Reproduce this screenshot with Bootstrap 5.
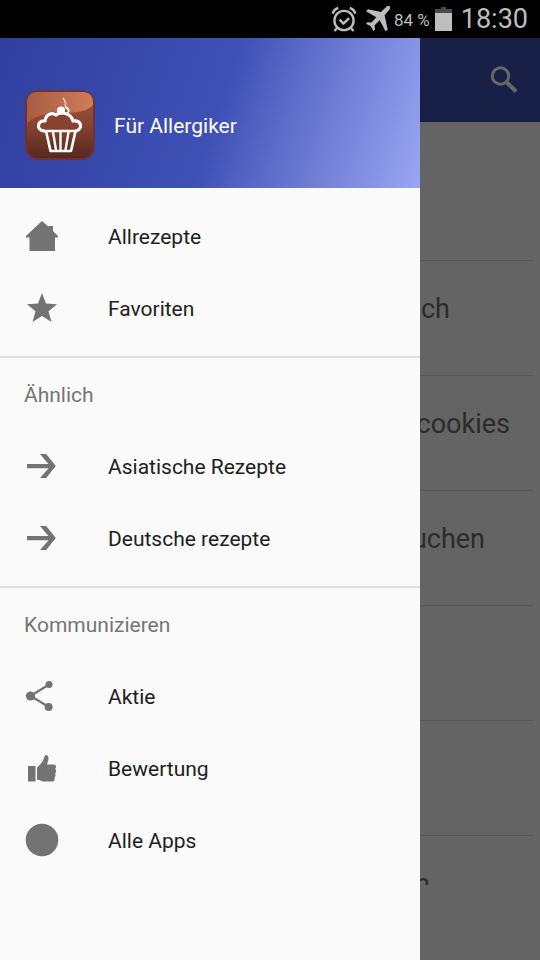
<!DOCTYPE html>
<html lang="de">
<head>
<meta charset="utf-8">
<meta name="viewport" content="width=device-width, initial-scale=1">
<title>Für Allergiker</title>
<link href="https://cdn.jsdelivr.net/npm/bootstrap@5.3.0/dist/css/bootstrap.min.css" rel="stylesheet">
<style>
  body { font-family: Roboto, "Liberation Sans", sans-serif; background: #fafafa; color: #212121; }
  svg { display: block; flex-shrink: 0; }
  .status { height: 38px; background: #000; color: #bdbdbd; padding-right: 12px; }
  .battery-text { font-size: 17px; line-height: 24px; padding-top: 2px; margin-left: 3px; }
  .clock { font-size: 27px; line-height: 36px; margin-left: 8px; }
  .appbar { height: 84px; background: #3f51b5; padding-right: 18px; }
  .btn-search { width: 36px; height: 36px; color: #fff; }
  .recipes { flex: 1 1 0; }
  .recipe { height: 115px; padding-top: 32px; margin-right: 7px; border-bottom: 1px solid #dcdcdc;
            font-size: 27px; line-height: 32px; color: #6e6e6e; flex-shrink: 0; text-align: right; }
  .recipe-first { height: 139px; }
  .end-s { padding-right: 23px; }
  .end-m { padding-right: 48px; }
  .end-l { padding-right: 83px; }
  .end-xl { padding-right: 103px; }
  .adspace { height: 75px; }
  .scrim { background: rgba(0,0,0,.6); }
  .drawer { width: 420px; max-width: 88%; background: #fafafa; }
  .drawer-head { height: 150px; padding: 24px 24px 0; gap: 18px; color: #fff; font-size: 21px; line-height: 24px;
                 background: linear-gradient(108deg, #303f9f 0%, #3f51b5 52%, #5c6bc8 66%, #9aa6f2 100%); }
  .group { padding: 12px 0; }
  .group + .group { border-top: 2px solid #dedede; padding-top: 0; }
  .group-title { height: 72px; padding: 0 24px; font-size: 21px; line-height: 24px; font-weight: 400; color: #757575; }
  .entry { height: 72px; padding: 0 24px; gap: 48px; font-size: 21px; line-height: 24px; color: #212121; }
  .entry svg { color: #737373; }
  .entry span, .group-title span, .drawer-head span { padding-top: 2px; }
</style>
</head>
<body>
<div class="d-flex flex-column min-vh-100">
  <div class="status d-flex align-items-center justify-content-end">
    <svg width="26" height="28" viewBox="0 0 26 28" fill="none" stroke="#bdbdbd" stroke-width="2.4" aria-hidden="true">
      <circle cx="13" cy="15.500" r="9.600"/><path d="M8.600 14.700l3.900 3.800 5.600-5.300M1.600 8.700C2.400 6 4.400 3.800 7.200 3M24.400 8.700C23.600 6 21.600 3.800 18.800 3M6 23l-2.500 3M20 23l2.500 3"/>
    </svg>
    <svg class="ms-2" width="26" height="28" viewBox="0 0 26 28" fill="#bdbdbd" aria-hidden="true">
      <path d="M24.600 1.200c1 1.300.4 2.900-.9 4.400L19.600 10.200 22.700 24.400 20.600 26.300 14.700 15.300 9.600 20.300 10 24.500 8.500 26 5.800 21.300 1 18.700 2.500 17.200 6.500 17.500 11.300 12.300 1 6.300 3 4.200 16 7.100 20.400 2.700C21.900 1.200 23.500.1 24.600 1.200Z"/>
    </svg>
    <span class="battery-text">84 %</span>
    <svg class="ms-1" width="19" height="24" viewBox="0 0 19 24" aria-hidden="true">
      <path fill="#4a4a4a" d="M7 0h5v2h6v4H1V2h6z"/><path fill="#bdbdbd" d="M1 6h17v18H1z"/>
    </svg>
    <span class="clock">18:30</span>
  </div>

  <div class="position-relative flex-grow-1 d-flex flex-column">
    <header class="appbar d-flex align-items-center justify-content-end">
      <button type="button" class="btn btn-search p-0 border-0" aria-label="Suchen">
        <svg width="36" height="36" viewBox="0 0 36 36" fill="none" stroke="currentColor" aria-hidden="true">
          <circle cx="14.500" cy="14" r="8.200" stroke-width="3"/><path d="M20.500 20l9.500 9.500" stroke-width="4"/>
        </svg>
      </button>
    </header>
    <main class="recipes d-flex flex-column overflow-hidden">
      <div class="recipe recipe-first"></div>
      <div class="recipe end-l">ch</div>
      <div class="recipe end-s">cookies</div>
      <div class="recipe end-m">uchen</div>
      <div class="recipe"></div>
      <div class="recipe"></div>
      <div class="recipe end-xl">n</div>
    </main>
    <div class="adspace"></div>

    <div class="scrim position-absolute top-0 start-0 w-100 h-100"></div>

    <nav class="drawer position-absolute top-0 start-0 h-100" aria-label="Hauptmenü">
      <div class="drawer-head d-flex align-items-center">
        <svg width="72" height="72" viewBox="0 0 72 72" aria-hidden="true">
          <defs>
            <linearGradient id="choc" x1="0" y1="0" x2="0" y2="1"><stop offset="0" stop-color="#a3573d"/><stop offset=".5" stop-color="#87432f"/><stop offset="1" stop-color="#56271f"/></linearGradient>
            <linearGradient id="gloss" x1="0" y1="0" x2="1" y2="0"><stop offset="0" stop-color="#a85c42"/><stop offset="1" stop-color="#d07c58"/></linearGradient>
          </defs>
          <rect x="2" y="2" width="68" height="68" rx="12" fill="url(#choc)" stroke="#6b3340" stroke-width="2"/>
          <path d="M3 27V14Q3 3 14 3H58Q69 3 69 14V16C61 24 49 24 33 24 18 25 9 28 3 34Z" fill="url(#gloss)"/>
          <path d="M20 42C9 42 12 30 20 31 20 23 29 21 33 24 37 19 48 21 50 30 60 29 62 42 51 42Z" fill="#87432f"/>
          <g fill="none" stroke="#fff" stroke-linejoin="round" stroke-linecap="round">
            <path d="M20 42C12 41 13 31 21 32 22 25 28 23 32 26 37 22 47 24 49 32 58 31 59 40 52 42" stroke-width="3.200"/>
            <path d="M19.500 42H53M22 42L26.500 62H47L51.500 42" stroke-width="2.600"/>
            <path d="M29 43l3 18M36.500 43v18M44.500 43l-3 18" stroke-width="2.400"/>
          </g>
          <circle cx="37" cy="21.500" r="4" fill="#fff"/><path d="M41 18q5 1 3 6" fill="none" stroke="#fff" stroke-width="1.800"/>
          <path d="M41 17C43 14 41 12 39 9" fill="none" stroke="#f2cfc0" stroke-width="1.600"/>
        </svg>
        <span>Für Allergiker</span>
      </div>

      <div class="group">
        <a class="entry d-flex align-items-center text-decoration-none" href="#">
          <svg width="36" height="36" viewBox="0 0 36 36" fill="currentColor" aria-hidden="true"><path d="M18 3L24.500 8.800V8h4.500v5L34 18v1.500H31V33H5.500V19.500H2V18Z"/></svg>
          <span>Allrezepte</span></a>
        <a class="entry d-flex align-items-center text-decoration-none" href="#">
          <svg width="36" height="36" viewBox="0 0 36 36" fill="currentColor" aria-hidden="true"><path d="M18 3L22 13.500 33 14.300 24.500 21.300 27.500 32 18 26 8.500 32 11.500 21.300 3 14.300 14 13.500Z"/></svg>
          <span>Favoriten</span></a>
      </div>

      <div class="group">
        <h2 class="group-title d-flex align-items-center m-0"><span>Ähnlich</span></h2>
        <a class="entry d-flex align-items-center text-decoration-none" href="#">
          <svg width="36" height="36" viewBox="0 0 36 36" fill="currentColor" aria-hidden="true"><path d="M3 16H24.500L16 6h6.200L31.800 18 22.200 30H16L24.500 20.200H3Z"/></svg>
          <span>Asiatische Rezepte</span></a>
        <a class="entry d-flex align-items-center text-decoration-none" href="#">
          <svg width="36" height="36" viewBox="0 0 36 36" fill="currentColor" aria-hidden="true"><path d="M3 16H24.500L16 6h6.200L31.800 18 22.200 30H16L24.500 20.200H3Z"/></svg>
          <span>Deutsche rezepte</span></a>
      </div>

      <div class="group">
        <h2 class="group-title d-flex align-items-center m-0"><span>Kommunizieren</span></h2>
        <a class="entry d-flex align-items-center text-decoration-none" href="#">
          <svg width="36" height="36" viewBox="0 0 36 36" fill="currentColor" aria-hidden="true"><path d="M25 6.500L6.500 18 25 29" fill="none" stroke="currentColor" stroke-width="2.200"/><circle cx="6.500" cy="18" r="4.600"/><circle cx="25" cy="6.500" r="3.500"/><circle cx="24.600" cy="29" r="4"/></svg>
          <span>Aktie</span></a>
        <a class="entry d-flex align-items-center text-decoration-none" href="#">
          <svg width="36" height="36" viewBox="0 0 36 36" fill="currentColor" aria-hidden="true"><path d="M4 16h7.500v15.500H4zM13 17.500C17 14 19.500 11 20.500 6.500 21 4 24.500 4.500 24.500 8 24.500 10.500 23.500 12.500 23 14.500H30C32.500 14.500 32.500 18 31 18.500 32.500 20 32.500 22.500 31 23.300 32 25 31.500 26.800 30.500 27.300 31 29.500 30.500 31.500 28 31.500H20C17 31.500 16 29.800 13 29.800Z"/></svg>
          <span>Bewertung</span></a>
        <a class="entry d-flex align-items-center text-decoration-none" href="#">
          <svg width="36" height="36" viewBox="0 0 36 36" fill="currentColor" aria-hidden="true"><circle cx="18" cy="18" r="16.300"/></svg>
          <span>Alle Apps</span></a>
      </div>
    </nav>
  </div>
</div>
<script src="https://cdn.jsdelivr.net/npm/bootstrap@5.3.0/dist/js/bootstrap.bundle.min.js"></script>
</body>
</html>
